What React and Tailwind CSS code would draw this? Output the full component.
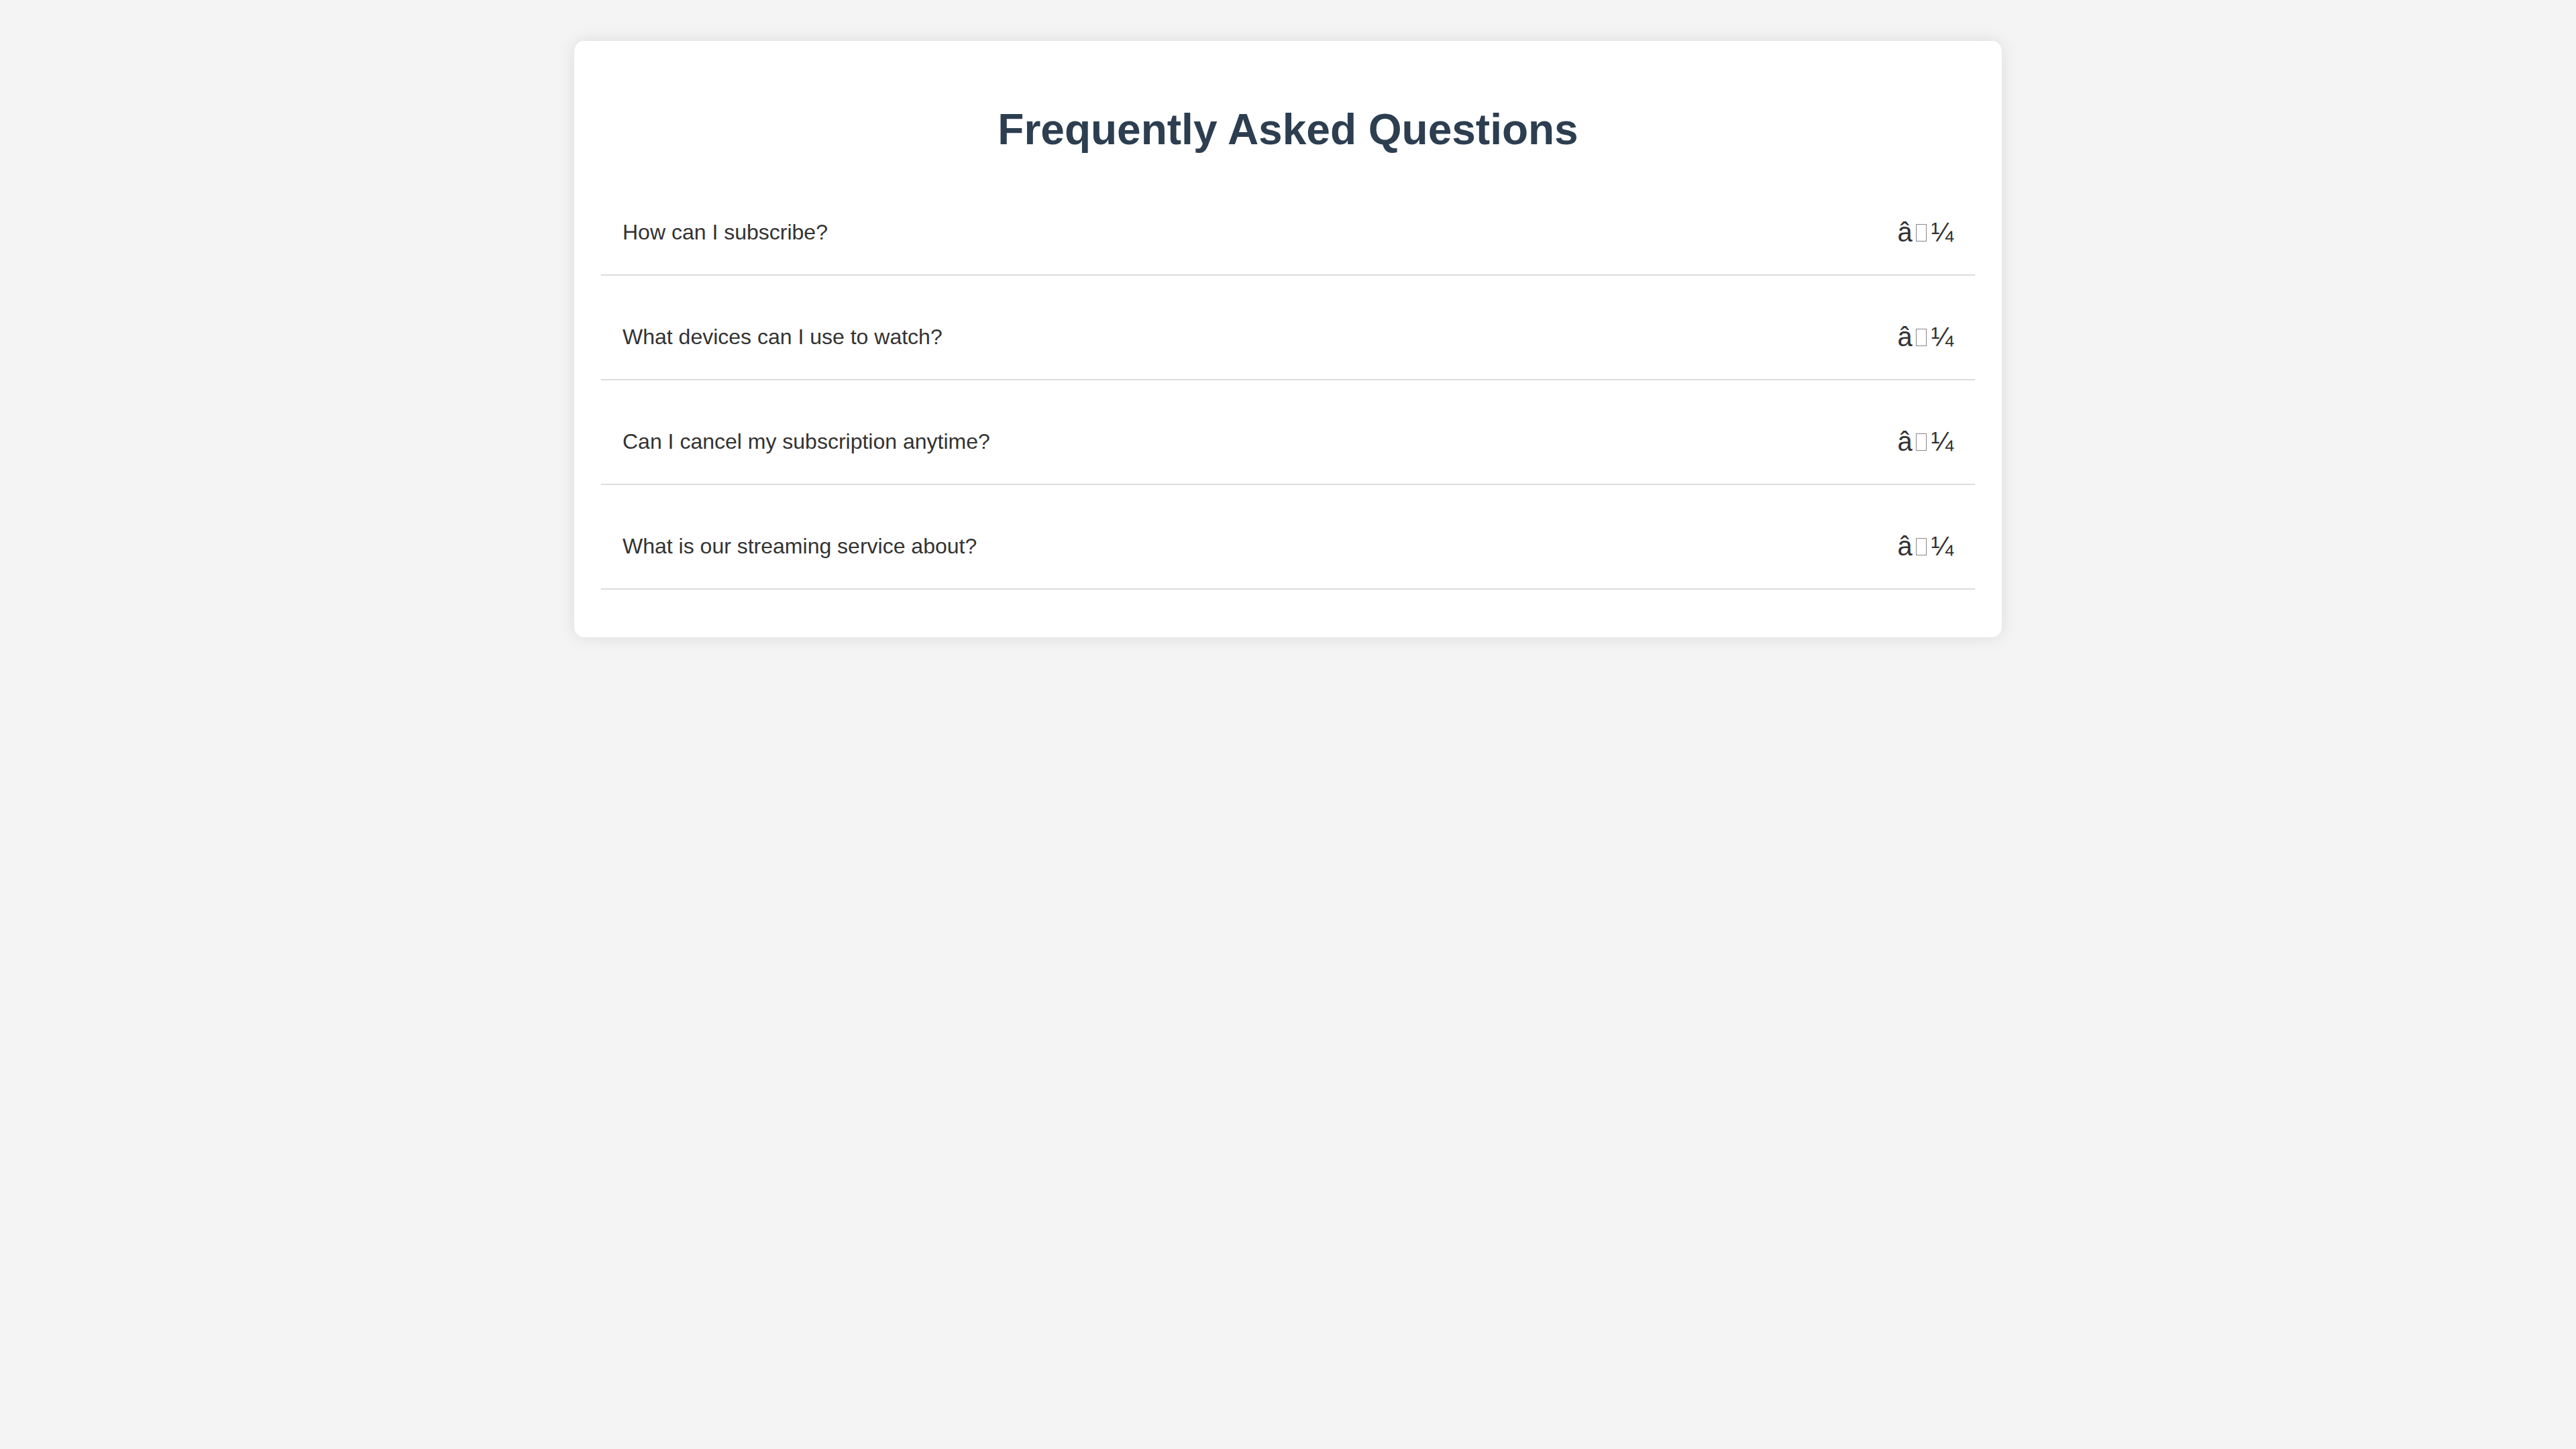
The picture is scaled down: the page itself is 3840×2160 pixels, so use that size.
import React, { useState } from 'react';

const faqs = [
  { q: 'How can I subscribe?', a: 'Choose a plan on the sign up page and enter your payment details.' },
  { q: 'What devices can I use to watch?', a: 'Smart TVs, phones, tablets, laptops and game consoles.' },
  { q: 'Can I cancel my subscription anytime?', a: 'Yes, you can cancel online at any time with no fees.' },
  { q: 'What is our streaming service about?', a: 'Movies, series and documentaries, streamed on demand.' },
];

// the arrow shows up as mojibake "â?¼" with a missing-glyph box in the middle
const Arrow = () => (
  <span className="text-[40px] leading-[46px] text-[#333333] whitespace-nowrap">
    â
    <span className="inline-block w-[16px] h-[26px] ml-[5px] mr-[7px] border border-[#888888]" />
    ¼
  </span>
);

const FaqItem = ({ item }) => {
  const [open, setOpen] = useState(false);

  return (
    <div className="mb-[28px] border-b-2 border-[#dddddd]">
      <button
        type="button"
        onClick={() => setOpen(!open)}
        className="w-full flex items-center justify-between px-[32px] py-[40px] text-left cursor-pointer"
      >
        <span className="text-[32px] leading-[37px] text-[#333333]">{item.q}</span>
        <Arrow />
      </button>
      {open && (
        <p className="px-[32px] pb-[40px] text-[30px] text-[#555555]">{item.a}</p>
      )}
    </div>
  );
};

const App = () => {
  return (
    <div
      className="min-h-screen bg-[#f4f4f4] pt-[61px]"
      style={{ fontFamily: '"Liberation Sans", Arial, sans-serif' }}
    >
      <div className="w-[2128px] mx-auto bg-white rounded-[15px] shadow-[0_0_26px_rgba(0,0,0,0.1)] px-[40px] pt-[40px] pb-[43px]">
        <h2 className="mt-[55px] mb-[53px] text-center text-[64px] leading-[74px] font-bold text-[#2c3e50]">
          Frequently Asked Questions
        </h2>
        <div>
          {faqs.map((item) => (
            <FaqItem key={item.q} item={item} />
          ))}
        </div>
      </div>
    </div>
  );
};

export default App;
